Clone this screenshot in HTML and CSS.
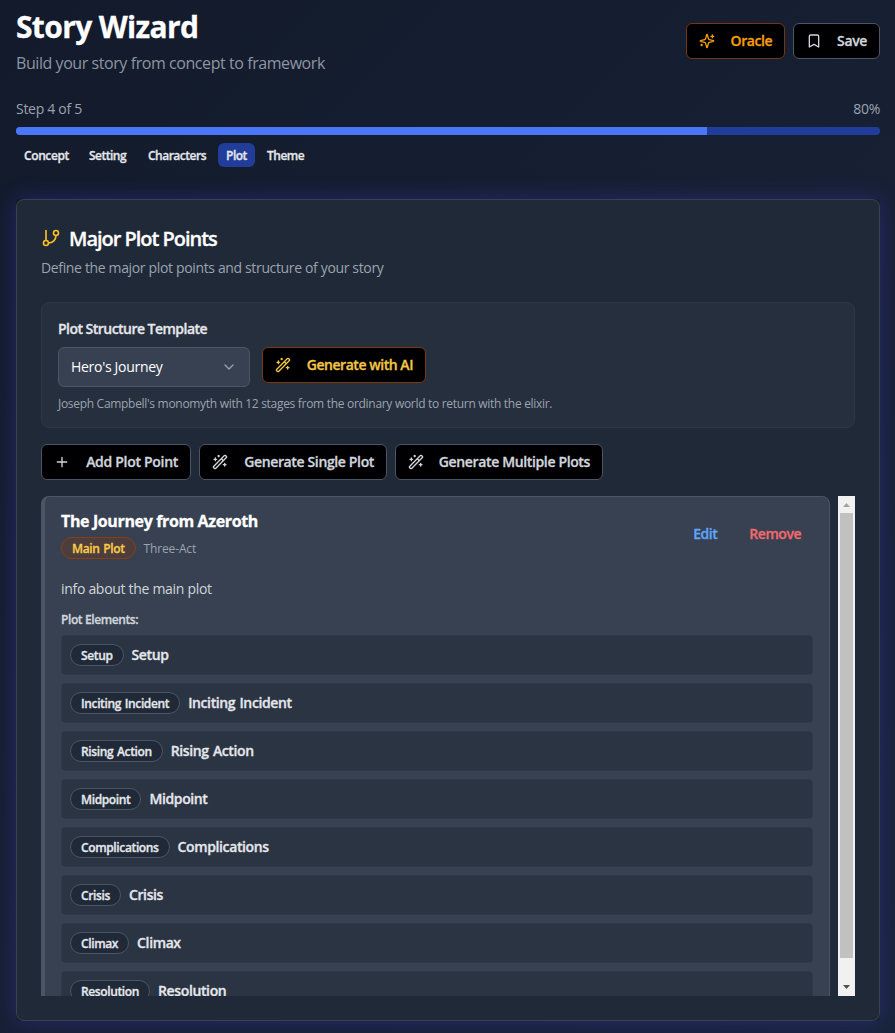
FILE: index.html
```html
<!DOCTYPE html>
<html lang="en">
<head>
<meta charset="utf-8">
<title>Story Wizard</title>
<link rel="stylesheet" href="styles.css">
</head>
<body>
<svg class="defs" width="0" height="0" aria-hidden="true">
  <symbol id="wand" viewBox="0 0 24 24"><path d="m21.64 3.64-1.28-1.28a1.21 1.21 0 0 0-1.72 0L2.36 18.64a1.21 1.21 0 0 0 0 1.72l1.28 1.28a1.2 1.2 0 0 0 1.72 0L21.64 5.36a1.2 1.2 0 0 0 0-1.72M14 7l3 3M5 6v4M19 14v4M10 2v2M7 8H3M21 16h-4M11 3H9"/></symbol>
</svg>
<main class="page">
  <header class="header">
    <div>
      <h1 class="title"><span>Story Wizard</span></h1>
      <p class="tagline"><span>Build your story from concept to framework</span></p>
    </div>
    <div class="actions">
      <button class="btn btn-oracle"><svg class="icon" viewBox="0 0 24 24"><path d="M9.937 15.5A2 2 0 0 0 8.5 14.063l-6.135-1.582a.5.5 0 0 1 0-.962L8.5 9.936A2 2 0 0 0 9.937 8.5l1.582-6.135a.5.5 0 0 1 .963 0L14.063 8.5A2 2 0 0 0 15.5 9.937l6.135 1.581a.5.5 0 0 1 0 .964L15.5 14.063a2 2 0 0 0-1.437 1.437l-1.582 6.135a.5.5 0 0 1-.963 0zM20 3v4M22 5h-4M4 17v2M5 18H3"/></svg><span>Oracle</span></button>
      <button class="btn btn-save"><svg class="icon" viewBox="0 0 24 24"><path d="m19 21-7-4-7 4V5a2 2 0 0 1 2-2h10a2 2 0 0 1 2 2v16z"/></svg><span>Save</span></button>
    </div>
  </header>

  <section class="progress">
    <div class="progress-labels"><span>Step 4 of 5</span><span>80%</span></div>
    <div class="track"><div class="fill" style="width:80%"></div></div>
    <nav class="steps">
      <a class="step step-concept">Concept</a>
      <a class="step step-setting">Setting</a>
      <a class="step step-characters">Characters</a>
      <a class="step step-plot active">Plot</a>
      <a class="step step-theme">Theme</a>
    </nav>
  </section>

  <div class="glow">
    <section class="card">
      <h2 class="card-title"><svg class="icon icon-lg" viewBox="0 0 24 24"><path d="M6 3v12M18 9a9 9 0 0 1-9 9"/><circle cx="18" cy="6" r="3"/><circle cx="6" cy="18" r="3"/></svg><span>Major Plot Points</span></h2>
      <p class="card-sub">Define the major plot points and structure of your story</p>

      <div class="template">
        <div class="template-label">Plot Structure Template</div>
        <div class="template-row">
          <div class="select"><span>Hero's Journey</span><svg class="icon chevron" viewBox="0 0 24 24"><path d="m6 9 6 6 6-6"/></svg></div>
          <button class="btn btn-ai"><svg class="icon"><use href="#wand"/></svg><span>Generate with AI</span></button>
        </div>
        <p class="hint">Joseph Campbell's monomyth with 12 stages from the ordinary world to return with the elixir.</p>
      </div>

      <div class="toolbar">
        <button class="btn btn-add"><svg class="icon" viewBox="0 0 24 24"><path d="M5 12h14M12 5v14"/></svg><span>Add Plot Point</span></button>
        <button class="btn btn-single"><svg class="icon"><use href="#wand"/></svg><span>Generate Single Plot</span></button>
        <button class="btn btn-multi"><svg class="icon"><use href="#wand"/></svg><span>Generate Multiple Plots</span></button>
      </div>

      <div class="scroller">
        <article class="plot">
          <div class="plot-head">
            <div>
              <h3 class="plot-title">The Journey from Azeroth</h3>
              <div class="plot-meta"><span class="badge badge-main">Main Plot</span><span class="structure">Three-Act</span></div>
            </div>
            <div class="plot-actions"><a class="edit">Edit</a><a class="remove">Remove</a></div>
          </div>
          <p class="plot-info">info about the main plot</p>
          <div class="elements-label">Plot Elements:</div>
          <ul class="elements">
            <li><span class="badge">Setup</span><span class="name">Setup</span></li>
            <li><span class="badge">Inciting Incident</span><span class="name">Inciting Incident</span></li>
            <li><span class="badge">Rising Action</span><span class="name">Rising Action</span></li>
            <li><span class="badge">Midpoint</span><span class="name">Midpoint</span></li>
            <li><span class="badge">Complications</span><span class="name">Complications</span></li>
            <li><span class="badge">Crisis</span><span class="name">Crisis</span></li>
            <li><span class="badge">Climax</span><span class="name">Climax</span></li>
            <li><span class="badge">Resolution</span><span class="name">Resolution</span></li>
          </ul>
        </article>
        <div class="scrollbar">
          <svg class="arrow" viewBox="0 0 17 17"><path fill="#a3a3a3" d="M5 11h7L8.500 7z"/></svg>
          <div class="thumb"></div>
          <svg class="arrow arrow-down" viewBox="0 0 17 17"><path fill="#505050" d="M5 6h7L8.500 10z"/></svg>
        </div>
      </div>
    </section>
  </div>
</main>
</body>
</html>
```
FILE: styles.css
```css
* { box-sizing: border-box; margin: 0; padding: 0; }
html { height: 100%; }
body {
  height: 1033px;
  overflow: hidden;
  background: linear-gradient(135deg, #121a2b, #172033 50%, #18243a);
  color: #e5e7eb;
  font-family: "Open Sans", "Noto Sans", sans-serif;
  font-size: 14px;
  line-height: 20px;
  letter-spacing: -0.3px;
  white-space: nowrap;
}
.defs { display: block; }
.page { padding: 8px 15px 0 16px; }
.icon {
  width: 16px; height: 16px; flex: none;
  fill: none; stroke: currentColor; stroke-width: 2;
  stroke-linecap: round; stroke-linejoin: round;
}
.header { display: flex; justify-content: space-between; height: 67px; }
.title { padding-top: 1px; font-size: 30px; line-height: 36px; font-weight: 700; color: #fff; letter-spacing: -0.65px; -webkit-text-stroke: .3px; }
.tagline { margin-top: 6px; font-size: 16px; line-height: 24px; color: #9ca3af; letter-spacing: -0.43px; opacity: .9; }
.actions { display: flex; gap: 8px; padding-top: 15px; }
.btn {
  display: flex; align-items: center; justify-content: space-between;
  height: 36px; padding: 0 12px;
  border: 1px solid #4b5563; border-radius: 6px;
  background: #000003; color: #d1d5db;
  font: 600 14px/20px "Open Sans", "Noto Sans", sans-serif;
  letter-spacing: -0.36px; white-space: nowrap;
}
.btn, .step, .card-title span, .template-label, .plot-title, .badge, .name, .plot-actions, .elements-label { -webkit-text-stroke: .3px; }
.btn-oracle { width: 99px; color: #f59e0b; border-color: #78350f; letter-spacing: -0.45px; }
.btn-save { width: 87px; }
.btn-ai { width: 164px; color: #f2c744; border-color: #7c3a0e; letter-spacing: -0.45px; }
.btn-add { width: 150px; letter-spacing: -0.3px; }
.btn-single { width: 188px; }
.btn-multi { width: 208px; }

.progress { padding-top: 24px; }
.progress-labels { display: flex; justify-content: space-between; color: #9ca3af; margin-bottom: 8px; }
.track { height: 8px; border-radius: 4px; overflow: hidden; background: #213d99; }
.fill { height: 100%; background: #4a77f7; }
.steps { display: flex; gap: 4px; margin-top: 8px; }
.step {
  height: 24px; padding: 0 8px; border-radius: 6px;
  font-size: 12px; line-height: 25px; font-weight: 600; letter-spacing: -0.5px;
}
.step-concept { width: 61px; letter-spacing: -0.4px; }
.step-setting { width: 55px; }
.step-characters { width: 74px; }
.step-plot { width: 37px; }
.step.active { background: #213d99; }

.glow { margin-top: 32px; box-shadow: 0 0 20px rgba(67, 56, 202, .38); }
.card {
  height: 822px; padding: 24px;
  border: 1px solid #374151; border-radius: 8px;
  background: #1f2937;
}
.card-title { display: flex; align-items: center; gap: 8px; height: 30px; color: #fff; font-size: 20px; font-weight: 600; letter-spacing: -1.03px; }
.icon-lg { width: 20px; height: 20px; margin-top: -2px; color: #fbbf24; }
.card-sub { margin-top: 4px; color: #9ca3af; letter-spacing: -0.35px; }
.template {
  height: 126px; margin-top: 24px; padding: 16px;
  border: 1px solid #2d3748; border-radius: 8px;
  background: #262f3e;
}
.template-label { font-weight: 600; letter-spacing: -0.53px; }
.template-row { display: flex; gap: 12px; margin-top: 8px; }
.select {
  display: flex; align-items: center; justify-content: space-between;
  width: 192px; height: 40px; padding: 0 12px;
  border: 1px solid #4b5563; border-radius: 6px;
  background: #374151; color: #fff;
}
.chevron { opacity: .5; }
.hint { margin-top: 9px; font-size: 12px; line-height: 16px; color: #9ca3af; }
.toolbar { display: flex; gap: 8px; margin-top: 16px; }

.scroller { display: flex; gap: 8px; height: 500px; margin-top: 16px; overflow: hidden; }
.plot {
  flex: 1; height: 560px; padding: 15px 16px 16px;
  border: 1px solid #4b5563; border-left-width: 4px; border-radius: 8px;
  background: #374151;
}
.plot-head { display: flex; justify-content: space-between; height: 47px; }
.plot-title { font-size: 16px; line-height: 18px; font-weight: 700; color: #fff; letter-spacing: -0.37px; }
.plot-meta { display: flex; align-items: center; gap: 8px; margin-top: 7px; }
.badge {
  height: 22px; padding: 0 10px;
  border: 1px solid #4b5563; border-radius: 11px;
  background: #1f2937; font-size: 12px; line-height: 22px; font-weight: 600; letter-spacing: -0.37px; word-spacing: 1px;
}
.badge-main { background: #4d3d3c; border-color: #8a3f12; color: #f5cc48; }
.structure { padding-top: 2px; color: #9ca3af; font-size: 12px; letter-spacing: -0.15px; }
.plot-actions { display: flex; gap: 32px; padding: 12px 12px 0 0; font-weight: 600; letter-spacing: -0.47px; }
.edit { color: #60a5fa; }
.remove { color: #f06a6d; }
.plot-info { margin-top: 20px; color: #d1d5db; }
.elements-label { margin-top: 13px; font-size: 12px; line-height: 16px; font-weight: 600; color: #d1d5db; letter-spacing: -0.4px; }
.elements { display: grid; gap: 8px; margin-top: 7px; list-style: none; }
.elements li {
  display: flex; align-items: center; gap: 8px;
  height: 40px; padding: 0 8px;
  border: 1px solid #2f3947; border-radius: 4px; background: #2b3443;
}
.name { font-weight: 600; letter-spacing: -0.38px; word-spacing: 1px; }

.scrollbar { display: flex; flex-direction: column; align-items: center; width: 17px; height: 500px; background: #f1f1f1; }
.arrow { display: block; width: 17px; height: 17px; }
.arrow-down { margin-top: auto; }
.thumb { width: 13px; height: 445px; background: #c1c1c1; }
```
